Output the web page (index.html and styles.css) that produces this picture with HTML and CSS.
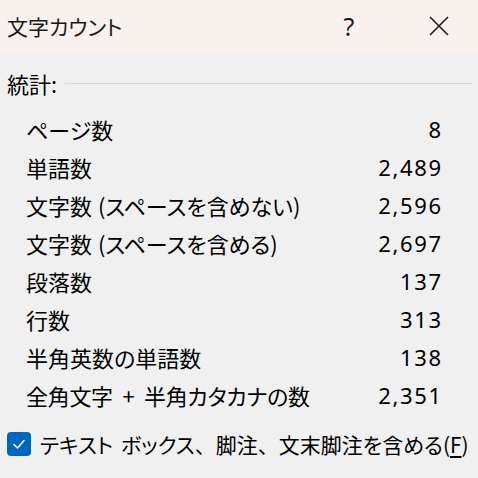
FILE: index.html
```html
<!DOCTYPE html>
<html lang="ja">
<head>
<meta charset="utf-8">
<link rel="stylesheet" href="styles.css">
</head>
<body>
<div class="dialog">
  <div class="titlebar">
    <div class="title">文字カウント</div>
    <div class="help">?</div>
    <div class="close">
      <svg width="20" height="20" viewBox="0 0 20 20"><path d="M1 1 L19 19 M19 1 L1 19" stroke="#1a1a1a" stroke-width="1.6" fill="none"/></svg>
    </div>
  </div>
  <div class="content">
    <div class="group-head">
      <span class="group-label">統計:</span>
      <span class="group-line"></span>
    </div>
    <div class="stats">
      <div class="row"><span class="label">ページ数</span><span class="value">8</span></div>
      <div class="row"><span class="label">単語数</span><span class="value">2,489</span></div>
      <div class="row"><span class="label">文字数 (スペースを含めない)</span><span class="value">2,596</span></div>
      <div class="row"><span class="label">文字数 (スペースを含める)</span><span class="value">2,697</span></div>
      <div class="row"><span class="label">段落数</span><span class="value">137</span></div>
      <div class="row"><span class="label">行数</span><span class="value">313</span></div>
      <div class="row"><span class="label">半角英数の単語数</span><span class="value">138</span></div>
      <div class="row"><span class="label label-wide">全角文字 + 半角カタカナの数</span><span class="value">2,351</span></div>
    </div>
    <div class="check">
      <span class="box">
        <svg width="14" height="14" viewBox="0 0 14 14"><path d="M2 7.5 L5.5 11 L12 3.5" stroke="#fff" stroke-width="1.5" fill="none" stroke-linecap="round" stroke-linejoin="round"/></svg>
      </span>
      <span class="check-label">テキスト ボックス<span class="full">、</span>脚注<span class="full">、</span>文末脚注を含める(<u>F</u>)</span>
    </div>
  </div>
</div>
</body>
</html>
```

FILE: styles.css
```css
html, body {
  margin: 0;
  padding: 0;
}
body {
  width: 478px;
  height: 478px;
  overflow: hidden;
  background: #f0f0f0;
  font-family: "Noto Sans CJK JP", "Noto Sans", sans-serif;
  font-feature-settings: "palt";
  color: #000;
  font-size: 21px;
}
.dialog {
  display: flex;
  flex-direction: column;
  height: 478px;
}
.titlebar {
  height: 52px;
  background: #f9f1ed;
  display: flex;
  align-items: center;
  padding-left: 7px;
}
.title {
  flex: 1;
  font-size: 21px;
  color: #1a1a1a;
}
.help {
  width: 20px;
  text-align: center;
  font-family: "Noto Sans", sans-serif;
  font-size: 25px;
  color: #1a1a1a;
  margin-right: 70px;
  line-height: 30px;
}
.close {
  width: 20px;
  height: 20px;
  margin-right: 29px;
  display: flex;
}
.content {
  display: flex;
  flex-direction: column;
  padding: 0 6px 0 7px;
}
.group-head {
  display: flex;
  align-items: center;
  padding: 19px 0 15px;
  height: 24px;
}
.group-label {
  line-height: 24px;
  font-size: 22px;
}
.group-line {
  flex: 1;
  height: 1px;
  background: #d8d8d8;
  margin-left: 8px;
}
.stats {
  display: flex;
  flex-direction: column;
  padding-left: 19px;
  padding-right: 31px;
}
.row {
  display: flex;
  justify-content: space-between;
  height: 38px;
  line-height: 38px;
}
.label {
  font-size: 22px;
  word-spacing: 1px;
}
.label-wide {
  word-spacing: 5px;
  letter-spacing: -0.3px;
}
.value {
  font-family: "Noto Sans", sans-serif;
  font-size: 22px;
  letter-spacing: 1.6px;
  margin-right: -1.6px;
}
.check {
  display: flex;
  align-items: center;
  margin-top: 16px;
  gap: 9px;
}
.box {
  width: 24px;
  height: 24px;
  border-radius: 4px;
  background: #0067c0;
  display: flex;
  align-items: center;
  justify-content: center;
}
.check-label {
  line-height: 28px;
  word-spacing: 3px;
}
.full {
  font-feature-settings: normal;
}
.check-label u {
  text-underline-offset: 3px;
}
```
